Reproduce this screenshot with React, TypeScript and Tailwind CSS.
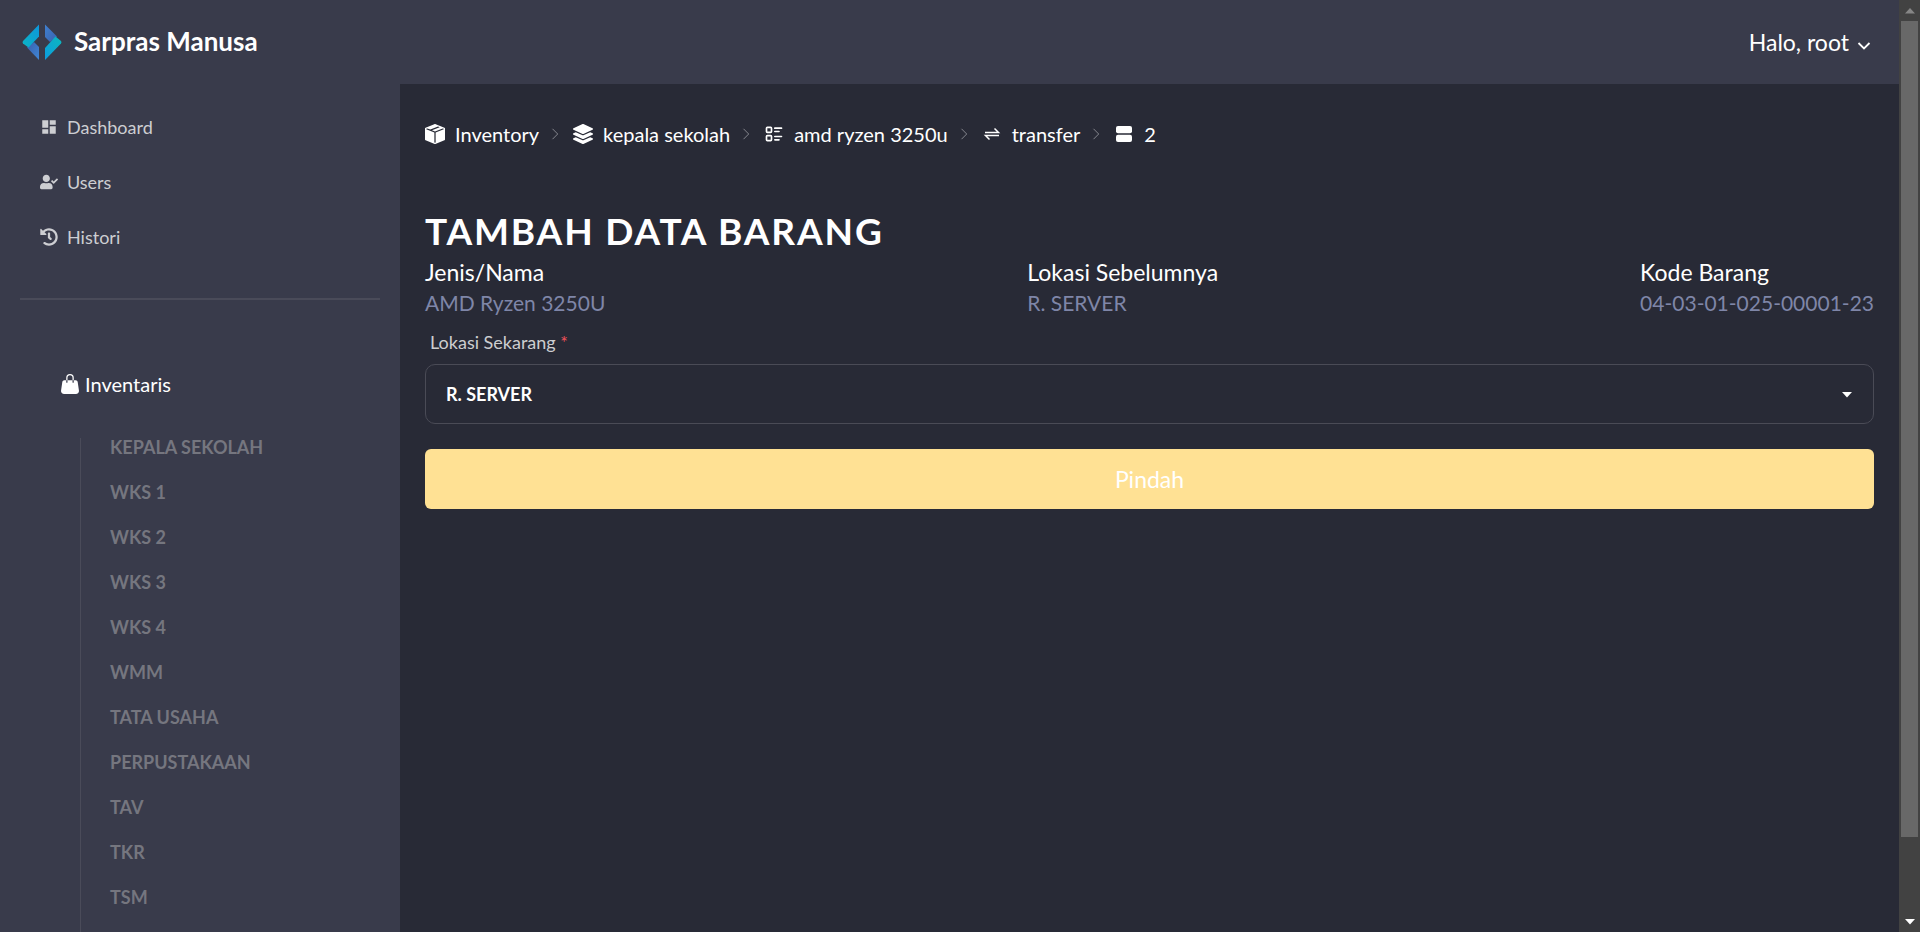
import type { ReactNode } from "react";
import { MdDashboard } from "react-icons/md";
import { FaHistory, FaLayerGroup, FaUserCheck } from "react-icons/fa";
import { BsBoxSeamFill, BsHandbagFill } from "react-icons/bs";
import { TbListDetails } from "react-icons/tb";

const menu = [
  { label: "Dashboard", icon: <MdDashboard className="size-[18px]" /> },
  { label: "Users", icon: <FaUserCheck className="size-[18px]" /> },
  { label: "Histori", icon: <FaHistory className="size-[18px]" /> },
];

const rooms = [
  "KEPALA SEKOLAH",
  "WKS 1",
  "WKS 2",
  "WKS 3",
  "WKS 4",
  "WMM",
  "TATA USAHA",
  "PERPUSTAKAAN",
  "TAV",
  "TKR",
  "TSM",
];

function Logo() {
  return (
    <svg viewBox="0 0 40 37" className="h-[37px] w-10" aria-hidden="true">
      <defs>
        <linearGradient id="cyan" x1="0" y1="1" x2="1" y2="0">
          <stop offset="0" stopColor="#0cb4c4" />
          <stop offset="1" stopColor="#0d96dc" />
        </linearGradient>
        <linearGradient id="cyanRight" x1="0" y1="1" x2="1" y2="0">
          <stop offset="0" stopColor="#0d9ce0" />
          <stop offset="1" stopColor="#0cb8bc" />
        </linearGradient>
        <linearGradient id="blue" x1="0" y1="0" x2="1" y2="1">
          <stop offset="0" stopColor="#3f80d0" />
          <stop offset="1" stopColor="#3a62ae" />
        </linearGradient>
        <linearGradient id="blueLeft" x1="0" y1="0" x2="1" y2="1">
          <stop offset="0" stopColor="#3a5fac" />
          <stop offset="1" stopColor="#3f86d6" />
        </linearGradient>
      </defs>
      <path d="M12 18 17 23V36L5 23.500Z" fill="url(#blueLeft)" />
      <path d="M17 .5V12.500L6.500 23.500 1 19.500Q0 18.300 1 17Z" fill="url(#cyan)" />
      <path d="M23 .5 35 12.500 28 18 23 13Z" fill="url(#blue)" />
      <path d="M23 36V24L33.500 12.500 39 17Q40 18.300 39 19.500Z" fill="url(#cyanRight)" />
    </svg>
  );
}

function TransferIcon() {
  return (
    <svg viewBox="0 0 20 20" className="size-5" fill="none" stroke="currentColor" strokeWidth="1.500" aria-hidden="true">
      <path d="M3 8.500H16.500L12.500 4.500M17 11.500H3.500L7.500 15.500" />
    </svg>
  );
}

function DrawerIcon() {
  return (
    <svg viewBox="0 0 20 20" className="size-5" fill="currentColor" aria-hidden="true">
      <rect x="2" y="2" width="16" height="7.200" rx="2" />
      <rect x="2" y="10.800" width="16" height="7.200" rx="2" />
    </svg>
  );
}

const crumbs: { label: string; icon: ReactNode }[] = [
  { label: "Inventory", icon: <BsBoxSeamFill className="size-5" /> },
  { label: "kepala sekolah", icon: <FaLayerGroup className="size-5" /> },
  { label: "amd ryzen 3250u", icon: <TbListDetails className="size-5" /> },
  { label: "transfer", icon: <TransferIcon /> },
  { label: "2", icon: <DrawerIcon /> },
];

const details = [
  { label: "Jenis/Nama", value: "AMD Ryzen 3250U" },
  { label: "Lokasi Sebelumnya", value: "R. SERVER" },
  { label: "Kode Barang", value: "04-03-01-025-00001-23" },
];

function Header() {
  return (
    <header className="flex h-[84px] shrink-0 items-center justify-between bg-[#393b4b] pr-7 pl-[22px]">
      <a href="#" className="flex items-center gap-3 text-[26px] leading-8 font-bold">
        <Logo />
        <span className="pb-0.5">Sarpras Manusa</span>
      </a>
      <button type="button" className="flex items-center gap-2 text-[23px] leading-7">
        Halo, root
        <svg viewBox="0 0 14 14" className="mt-2 size-3.5" fill="none" stroke="currentColor" strokeWidth="1.800" aria-hidden="true">
          <path d="M1.500 4 7 9.500 12.500 4" />
        </svg>
      </button>
    </header>
  );
}

function Sidebar() {
  return (
    <aside className="flex w-[400px] shrink-0 flex-col bg-[#393b4b] px-5">
      <nav className="mt-[15px] flex flex-col">
        {menu.map((item) => (
          <a key={item.label} href="#" className="flex h-[55px] items-center gap-[9px] pl-5 text-lg text-[#cdced2]">
            {item.icon}
            {item.label}
          </a>
        ))}
      </nav>
      <hr className="mt-[34px] border-t-2 border-[#4a4b59]" />
      <div className="mt-[70px] flex h-7 items-center gap-[5px] pl-10 text-xl">
        <BsHandbagFill className="size-5" />
        Inventaris
      </div>
      <ul className="mt-10 ml-[60px] flex flex-1 flex-col border-l border-[#4a4b59] pl-[29px]">
        {rooms.map((room) => (
          <li key={room} className="h-[45px]">
            <a href="#" className="block text-lg leading-[18px] font-bold text-[#75767f]">
              {room}
            </a>
          </li>
        ))}
      </ul>
    </aside>
  );
}

function Breadcrumbs() {
  return (
    <nav aria-label="Breadcrumb">
      <ol className="flex h-[30px] items-center text-xl">
        {crumbs.map((crumb, index) => (
          <li key={crumb.label} className="flex items-center">
            {index > 0 && (
              <svg viewBox="0 0 8 12" className="mr-3.5 ml-3 h-3 w-2" fill="none" stroke="#85868e" aria-hidden="true">
                <path d="M1.500 .8 6.700 6 1.500 11.200" />
              </svg>
            )}
            <a href="#" className="flex items-center gap-2.5">
              {crumb.icon}
              {crumb.label}
            </a>
          </li>
        ))}
      </ol>
    </nav>
  );
}

function TransferForm() {
  return (
    <form className="flex flex-col">
      <label htmlFor="lokasi" className="mt-3 pl-[5px] text-lg leading-6 text-[#cdced0]">
        Lokasi Sekarang <span className="text-[#f0525a]">*</span>
      </label>
      <div className="relative mt-2.5">
        <select
          id="lokasi"
          className="h-[60px] w-full appearance-none rounded-[10px] border border-[#4a4b56] bg-[#282a36] pr-12 pl-5 text-lg font-bold"
        >
          <option>R. SERVER</option>
        </select>
        <svg viewBox="0 0 10 6" className="pointer-events-none absolute top-7 right-[22px] h-1.5 w-2.5" fill="currentColor" aria-hidden="true">
          <path d="M0 0H10L5 5.500Z" />
        </svg>
      </div>
      <button type="button" className="mt-[25px] h-[60px] rounded-md bg-[#ffe194] text-[23px] text-white">
        Pindah
      </button>
    </form>
  );
}

function ScrollRail() {
  return (
    <div className="flex w-[21px] shrink-0 flex-col items-center bg-[#424242]" aria-hidden="true">
      <div className="flex h-[21px] shrink-0 items-center">
        <svg viewBox="0 0 10 6" className="h-1.5 w-2.5" fill="#868686">
          <path d="M0 5.500H10L5 0Z" />
        </svg>
      </div>
      <div className="w-[17px] grow-[816] bg-[#686868]" />
      <div className="grow-[74]" />
      <div className="flex h-[21px] shrink-0 items-center">
        <svg viewBox="0 0 10 6" className="h-1.5 w-2.5" fill="#ffffff">
          <path d="M0 0H10L5 5.500Z" />
        </svg>
      </div>
    </div>
  );
}

export default function App() {
  return (
    <div className="flex h-screen overflow-hidden bg-[#282a36] font-['Lato',sans-serif] text-white">
      <div className="flex min-w-0 flex-1 flex-col">
        <Header />
        <div className="flex min-h-0 flex-1">
          <Sidebar />
          <main className="min-w-0 flex-1 px-[25px] pt-[35px]">
            <Breadcrumbs />
            <h1 className="mt-[57px] text-[37px] leading-[50px] font-bold tracking-wider">TAMBAH DATA BARANG</h1>
            <dl className="flex justify-between">
              {details.map((detail) => (
                <div key={detail.label}>
                  <dt className="text-[23px] leading-8">{detail.label}</dt>
                  <dd className="text-[21px] leading-[30px] text-[#7f86a8]">{detail.value}</dd>
                </div>
              ))}
            </dl>
            <TransferForm />
          </main>
        </div>
      </div>
      <ScrollRail />
    </div>
  );
}
